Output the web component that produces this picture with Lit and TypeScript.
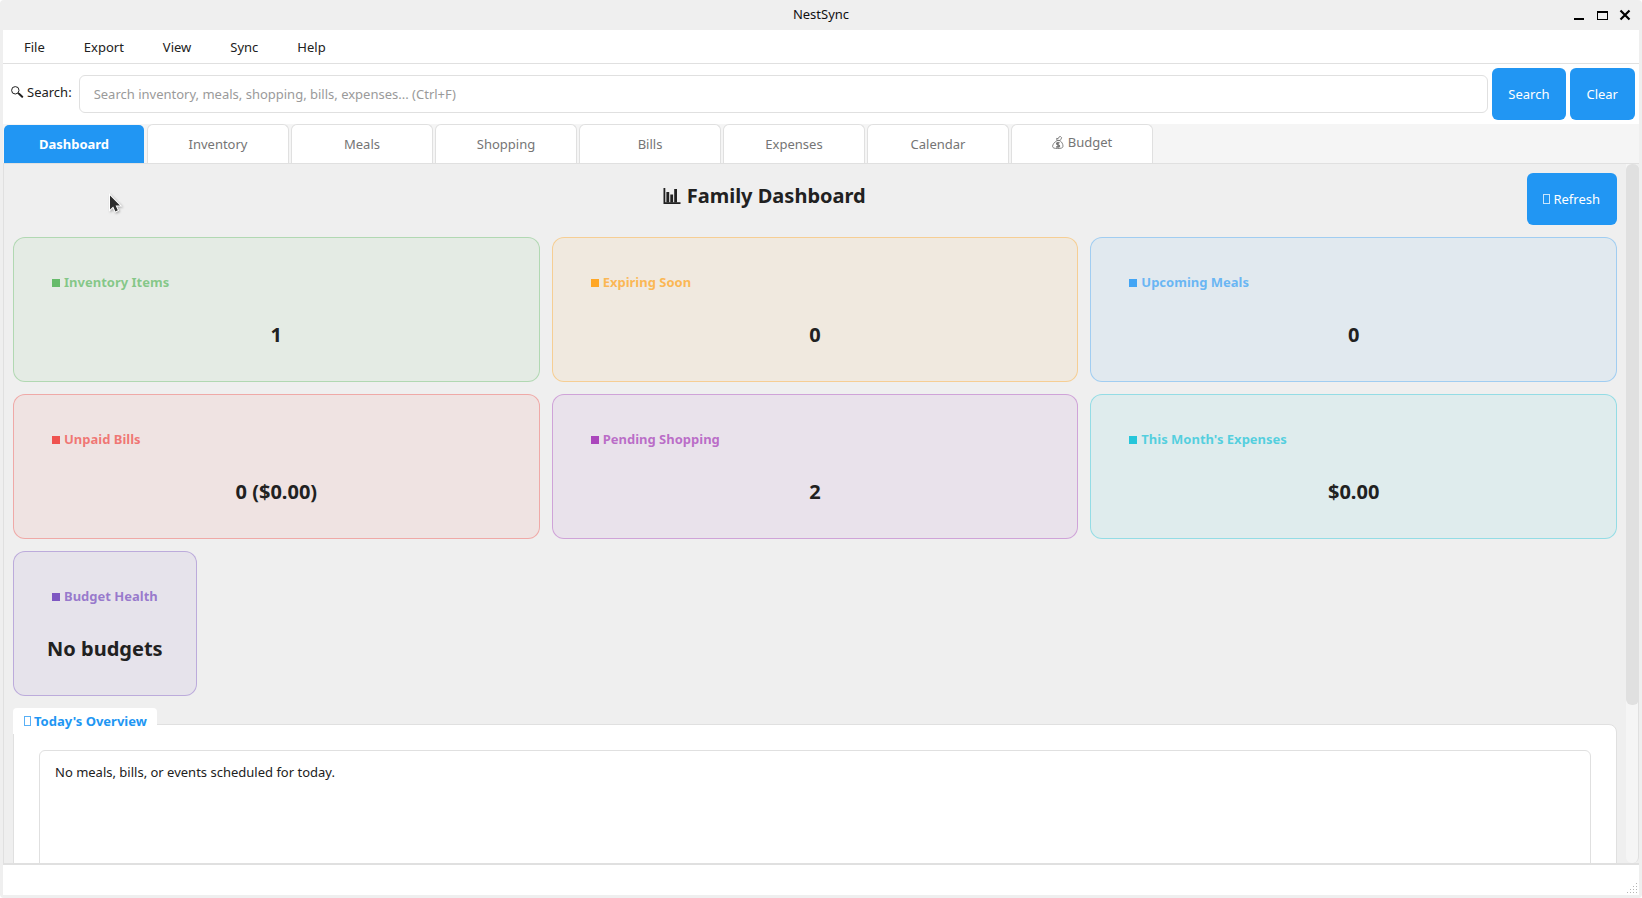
import { LitElement, html, css, svg } from "lit";
import { customElement, property, state } from "lit/decorators.js";
import { classMap } from "lit/directives/class-map.js";

const MENUS = ["File", "Export", "View", "Sync", "Help"];
const TABS = ["Dashboard", "Inventory", "Meals", "Shopping", "Bills", "Expenses", "Calendar", "Budget"];

interface Stat {
  title: string;
  value: string;
  tone: string;
}

const STATS: Stat[] = [
  { title: "Inventory Items", value: "1", tone: "green" },
  { title: "Expiring Soon", value: "0", tone: "orange" },
  { title: "Upcoming Meals", value: "0", tone: "blue" },
  { title: "Unpaid Bills", value: "0 ($0.00)", tone: "red" },
  { title: "Pending Shopping", value: "2", tone: "purple" },
  { title: "This Month's Expenses", value: "$0.00", tone: "cyan" },
  { title: "Budget Health", value: "No budgets", tone: "violet" },
];

/* Hollow box shown where a pictograph has no glyph */
const missingGlyph = html`<svg class="missing" width="7" height="10" viewBox="0 0 7 10" aria-hidden="true">
  <rect x="0.5" y="0.5" width="6" height="9" fill="none" stroke="currentColor" stroke-width="1" opacity="0.75" />
</svg>`;

const magnifier = html`<svg width="13" height="12" viewBox="0 0 13 12" aria-hidden="true">
  <circle cx="4.3" cy="4.3" r="3.7" fill="none" stroke="currentColor" stroke-width="1" />
  <path d="M6.8 6.8L8 8" stroke="currentColor" stroke-width="1" />
  <path d="M8 7.8L11.2 10.8" stroke="currentColor" stroke-width="2" stroke-linecap="round" />
</svg>`;

const moneyBag = html`<svg width="12" height="13" viewBox="0 0 12 13" aria-hidden="true">
  <path d="M5 4.6C2.4 6.2 0.6 8.4 0.6 10.4C0.6 12 2.4 12.5 5.6 12.5C9 12.5 11 12 11 10.2C11 8 9.8 6 8 4.6Z"
    fill="none" stroke="currentColor" stroke-width="0.9" />
  <path d="M5 4.4L4.6 2.4L6.2 2.6L7.2 0.8L8.6 0.6L9.6 1.6L9 3.2L8 4.4Z" fill="none" stroke="currentColor" stroke-width="0.9" />
  <path d="M7.6 6.9C6.6 6.3 4.6 6.5 4.6 7.7C4.6 9.1 7.6 8.5 7.6 10C7.6 11.3 5.2 11.3 4.2 10.6M6 5.9V11.8"
    fill="none" stroke="currentColor" stroke-width="1.3" />
</svg>`;

const barChart = html`<svg width="18" height="16" viewBox="0 0 18 16" aria-hidden="true">
  <path d="M0.5 0H2.3V14.2H17.5V16H0.5Z" fill="currentColor" />
  <path d="M3.4 4H6.2V14.6H3.4ZM7.3 6.6H10.1V14.6H7.3ZM11.2 1H14V14.6H11.2Z" fill="currentColor" />
</svg>`;

@customElement("stat-card")
export class StatCard extends LitElement {
  @property() heading = "";
  @property() value = "";

  static styles = css`
    :host {
      display: flex;
      flex-direction: column;
      box-sizing: border-box;
      height: 145px;
      padding: 34px 20px 0;
      border: 1px solid rgb(var(--tone) / 0.4);
      border-radius: 12px;
      background: rgb(var(--tone) / 0.08);
    }
    .heading {
      display: flex;
      align-items: center;
      gap: 4px;
      margin: 0;
      padding: 0 18px;
      font-size: 13px;
      line-height: 20px;
      font-weight: 700;
      white-space: nowrap;
      color: rgb(var(--tone) / 0.75);
    }
    .mark {
      width: 8px;
      height: 8px;
      margin-top: 2px;
      background: rgb(var(--tone));
    }
    .value {
      display: flex;
      justify-content: center;
      margin: 28px 0 0;
      font-size: 20px;
      line-height: 30px;
      font-weight: 700;
      white-space: nowrap;
      color: #212121;
    }
  `;

  render() {
    return html`
      <h2 class="heading"><span class="mark"></span><span>${this.heading}</span></h2>
      <p class="value">${this.value}</p>
    `;
  }
}

@customElement("app-root")
export class AppRoot extends LitElement {
  @state() private active = "Dashboard";
  @state() private query = "";

  static styles = css`
    :host {
      display: block;
      height: 100vh;
      background: #ffffff;
      font-family: "Noto Sans", "Open Sans", sans-serif;
      font-size: 13px;
      line-height: 18px;
      color: #212121;
    }
    button,
    input {
      font: inherit;
      color: inherit;
      margin: 0;
      padding: 0;
      border: 0;
      background: none;
    }
    svg {
      display: block;
      flex: none;
    }
    .window {
      display: flex;
      flex-direction: column;
      box-sizing: border-box;
      height: 100%;
      padding: 0 3px 3px;
      border-radius: 4px;
      background: #efefef;
    }
    .titlebar {
      display: grid;
      grid-template-columns: 1fr auto 1fr;
      align-items: center;
      height: 30px;
      flex: none;
    }
    .title {
      grid-column: 2;
      align-self: start;
      margin: 0;
      font-size: 13px;
      line-height: 28px;
      font-weight: 400;
      color: #111111;
    }
    .controls {
      display: flex;
      justify-content: flex-end;
      gap: 9px;
      padding-right: 7px;
      color: #000000;
    }
    .menubar {
      display: flex;
      align-items: center;
      gap: 7px;
      height: 33px;
      flex: none;
      padding: 0 5px;
      border-bottom: 1px solid #e0e0e0;
      background: #ffffff;
    }
    .menu {
      padding: 0 16px;
      line-height: 32px;
    }
    .searchbar {
      display: flex;
      align-items: center;
      gap: 4px;
      padding: 4px;
      background: #ffffff;
    }
    .search-label {
      display: flex;
      align-items: center;
      gap: 3px;
      padding: 0 3px 4px 4px;
      white-space: nowrap;
    }
    .search-input {
      box-sizing: border-box;
      flex: 1;
      min-width: 0;
      height: 38px;
      padding: 0 14px;
      border: 1px solid #e0e0e0;
      border-radius: 6px;
      background: #ffffff;
    }
    .search-input::placeholder {
      color: #9a9a9a;
      opacity: 1;
    }
    .primary {
      display: flex;
      align-items: center;
      gap: 3px;
      height: 52px;
      padding: 0 17px 0 16px;
      border-radius: 6px;
      background: #2196f3;
      color: #ffffff;
      white-space: nowrap;
    }
    .tabs {
      display: flex;
      gap: 2px;
      height: 39px;
      flex: none;
      background: #f5f5f5;
    }
    .tab {
      display: flex;
      align-items: center;
      justify-content: center;
      gap: 4px;
      box-sizing: border-box;
      width: 142px;
      border: 1px solid #e0e0e0;
      border-bottom: 0;
      border-radius: 6px 6px 0 0;
      background: #ffffff;
      color: #757575;
    }
    .tab.active {
      border-color: transparent;
      background: #2196f3 padding-box;
      color: #ffffff;
      font-weight: 700;
    }
    .tab.with-icon {
      padding-bottom: 4px;
    }
    .pane {
      display: flex;
      flex: 1;
      min-height: 0;
      border: 1px solid #e0e0e0;
      border-right: 0;
      background: #efefef;
    }
    .content {
      flex: 1;
      min-width: 0;
      overflow: hidden;
      padding: 9px 9px 0;
    }
    .header {
      display: flex;
      gap: 12px;
    }
    .heading {
      display: flex;
      flex: 1;
      align-items: center;
      justify-content: center;
      gap: 6px;
      margin: 0;
      padding-bottom: 6px;
      font-size: 20px;
      line-height: 28px;
      font-weight: 700;
    }
    .cards {
      display: grid;
      grid-template-columns: repeat(3, 1fr);
      gap: 12px;
      margin-top: 12px;
    }
    .green { --tone: 102 187 106; }
    .orange { --tone: 255 167 38; }
    .blue { --tone: 66 165 245; }
    .red { --tone: 239 83 80; }
    .purple { --tone: 171 71 188; }
    .cyan { --tone: 38 198 218; }
    .violet {
      --tone: 126 87 194;
      justify-self: start;
    }
    .overview-title {
      display: flex;
      align-items: center;
      gap: 3px;
      position: relative;
      width: fit-content;
      height: 26px;
      margin: 12px 0 -10px;
      padding: 0 10px 0 11px;
      border-radius: 4px 4px 0 0;
      background: #ffffff;
      color: #2196f3;
      font-size: 13px;
      font-weight: 700;
    }
    .overview {
      padding: 25px;
      border: 1px solid #e0e0e0;
      border-radius: 8px;
      background: #ffffff;
    }
    .events {
      min-height: 200px;
      padding: 12px 15px;
      border: 1px solid #e0e0e0;
      border-radius: 6px;
    }
    .events p {
      margin: 0;
    }
    .scrollbar {
      box-sizing: border-box;
      width: 13px;
      flex: none;
      border-right: 1px solid #e0e0e0;
      background: #f5f5f5;
      border-radius: 0 6px 6px 6px;
    }
    .thumb {
      height: 541px;
      margin-right: -1px;
      border-radius: 6px;
      background: #e0e0e0;
    }
    .statusbar {
      display: flex;
      align-items: flex-end;
      justify-content: flex-end;
      height: 30px;
      flex: none;
      border-top: 1px solid #e0e0e0;
      background: #ffffff;
    }
    .pointer {
      position: absolute;
      left: 108px;
      top: 193px;
      pointer-events: none;
      filter: drop-shadow(1px 1px 1px rgb(0 0 0 / 0.3));
    }
  `;

  render() {
    return html`
      <div class="window">
        <header class="titlebar">
          <h1 class="title">NestSync</h1>
          <div class="controls">
            <button aria-label="Minimize">
              <svg width="14" height="12" viewBox="0 0 14 12"><path d="M2 9H12V11H2Z" /></svg>
            </button>
            <button aria-label="Maximize">
              <svg width="14" height="12" viewBox="0 0 14 12">
                <path d="M2 2H13V11H2ZM3 4V10H12V4Z" fill-rule="evenodd" />
              </svg>
            </button>
            <button aria-label="Close">
              <svg width="14" height="12" viewBox="0 0 14 12">
                <path d="M2.5 1.5L11.5 10.5M11.5 1.5L2.5 10.5" fill="none" stroke="currentColor" stroke-width="2.2" />
              </svg>
            </button>
          </div>
        </header>

        <nav class="menubar">${MENUS.map((m) => html`<button class="menu">${m}</button>`)}</nav>

        <form class="searchbar" @submit=${(e: Event) => e.preventDefault()}>
          <label class="search-label" for="search">${magnifier}<span>Search:</span></label>
          <input
            class="search-input"
            id="search"
            type="text"
            placeholder="Search inventory, meals, shopping, bills, expenses... (Ctrl+F)"
            .value=${this.query}
            @input=${(e: Event) => (this.query = (e.target as HTMLInputElement).value)}
          />
          <button class="primary" type="submit">Search</button>
          <button class="primary" type="button" @click=${() => (this.query = "")}>Clear</button>
        </form>

        <div class="tabs" role="tablist">
          ${TABS.map(
            (t) => html`<button
              class=${classMap({ tab: true, active: t === this.active, "with-icon": t === "Budget" })}
              role="tab"
              aria-selected=${t === this.active ? "true" : "false"}
              @click=${() => (this.active = t)}
            >
              ${t === "Budget" ? moneyBag : null}<span>${t}</span>
            </button>`
          )}
        </div>

        <main class="pane">
          <div class="content">
            <div class="header">
              <h2 class="heading">${barChart}<span>Family Dashboard</span></h2>
              <button class="primary">${missingGlyph}<span>Refresh</span></button>
            </div>
            <section class="cards">
              ${STATS.map(
                (s) => html`<stat-card class=${s.tone} .heading=${s.title} .value=${s.value}></stat-card>`
              )}
            </section>
            <section>
              <h2 class="overview-title">${missingGlyph}<span>Today's Overview</span></h2>
              <div class="overview">
                <div class="events"><p>No meals, bills, or events scheduled for today.</p></div>
              </div>
            </section>
          </div>
          <div class="scrollbar"><div class="thumb"></div></div>
        </main>

        <footer class="statusbar">
          <svg width="13" height="13" viewBox="0 0 13 13" aria-hidden="true" fill="#b4b4b4">
            ${[0, 1, 2, 3].map((r) =>
              Array.from({ length: r + 1 }, (_, c) => svg`<rect x=${10 - c * 3} y=${1 + r * 3} width="1" height="1" />`)
            )}
          </svg>
        </footer>
      </div>
      <svg class="pointer" width="15" height="22" viewBox="0 0 15 22" aria-hidden="true">
        <path
          d="M2 2.5V16.5L5.2 13.6L7.4 18.4L9.8 17.3L7.6 12.6H12Z"
          fill="#2b2b2b"
          stroke="#ffffff"
          stroke-width="2"
          paint-order="stroke"
        />
      </svg>
    `;
  }
}
